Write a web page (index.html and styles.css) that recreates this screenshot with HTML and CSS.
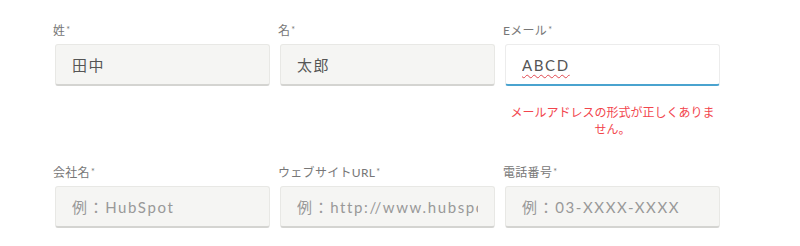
FILE: index.html
```html
<!DOCTYPE html>
<html lang="ja">
<head>
    <meta charset="UTF-8">
    <meta name="viewport" content="width=device-width, initial-scale=1.0">
    <title>お問い合わせフォーム</title>
    <link rel="stylesheet" href="styles.css">
</head>
<body>
    <form class="form-grid" onsubmit="return false">
        <div class="field">
            <label for="lastname">姓<span class="req">*</span></label>
            <input type="text" id="lastname" value="田中">
        </div>
        <div class="field">
            <label for="firstname">名<span class="req">*</span></label>
            <input type="text" id="firstname" value="太郎">
        </div>
        <div class="field">
            <label for="email">Eメール<span class="req">*</span></label>
            <div class="input-wrap">
                <input type="email" id="email" class="invalid" value="ABCD" spellcheck="false">
                <!-- spellcheck squiggle drawn over the typed value -->
                <span class="spell">ABCD</span>
            </div>
            <div class="error">メールアドレスの形式が正しくありません。</div>
        </div>

        <div class="field">
            <label for="company">会社名<span class="req">*</span></label>
            <input type="text" id="company" placeholder="例：HubSpot">
        </div>
        <div class="field">
            <label for="website">ウェブサイトURL<span class="req">*</span></label>
            <input type="text" id="website" placeholder="例：http://www.hubspot.jp">
        </div>
        <div class="field">
            <label for="phone">電話番号<span class="req">*</span></label>
            <input type="text" id="phone" placeholder="例：03-XXXX-XXXX">
        </div>
    </form>
</body>
</html>
```

FILE: styles.css
```css
body { margin: 0; background: #fff; font-family: Lato, "Noto Sans CJK JP", sans-serif; color: #33475b; }
.form-grid { display: grid; grid-template-columns: repeat(3, 215px); column-gap: 10px; row-gap: 27px; padding: 23px 0 0 55px; align-items: start; }
.field { display: flex; flex-direction: column; }
label { font-size: 12px; line-height: 16px; color: #777; margin: 0 0 5px -2px; letter-spacing: 0.3px; }
label .req { font-size: 9px; vertical-align: top; position: relative; top: -1px; margin-left: 1px; }
input { box-sizing: border-box; height: 42px; width: 100%; padding: 0 16px; font-family: Lato, "Noto Sans CJK JP", sans-serif; font-size: 15px; letter-spacing: 1.6px; color: #555; background: #f5f5f3; border: 1px solid #e8e8e5; border-bottom: 2px solid #d4d4d1; border-radius: 3px; outline: none; }
input::placeholder { color: #999; }
input.invalid { background: #fff; border-color: #ececec; border-bottom: 2px solid #4aa3cf; }
.input-wrap { position: relative; }
.spell { position: absolute; left: 17px; top: 11px; font-size: 15px; line-height: 20px; letter-spacing: 1.6px; color: transparent; pointer-events: none; text-decoration: underline wavy #e0484f; text-decoration-thickness: 1px; text-underline-offset: 3px; }
.error { margin-top: 18px; font-size: 12px; line-height: 17px; color: #f2454d; text-align: center; }
```
